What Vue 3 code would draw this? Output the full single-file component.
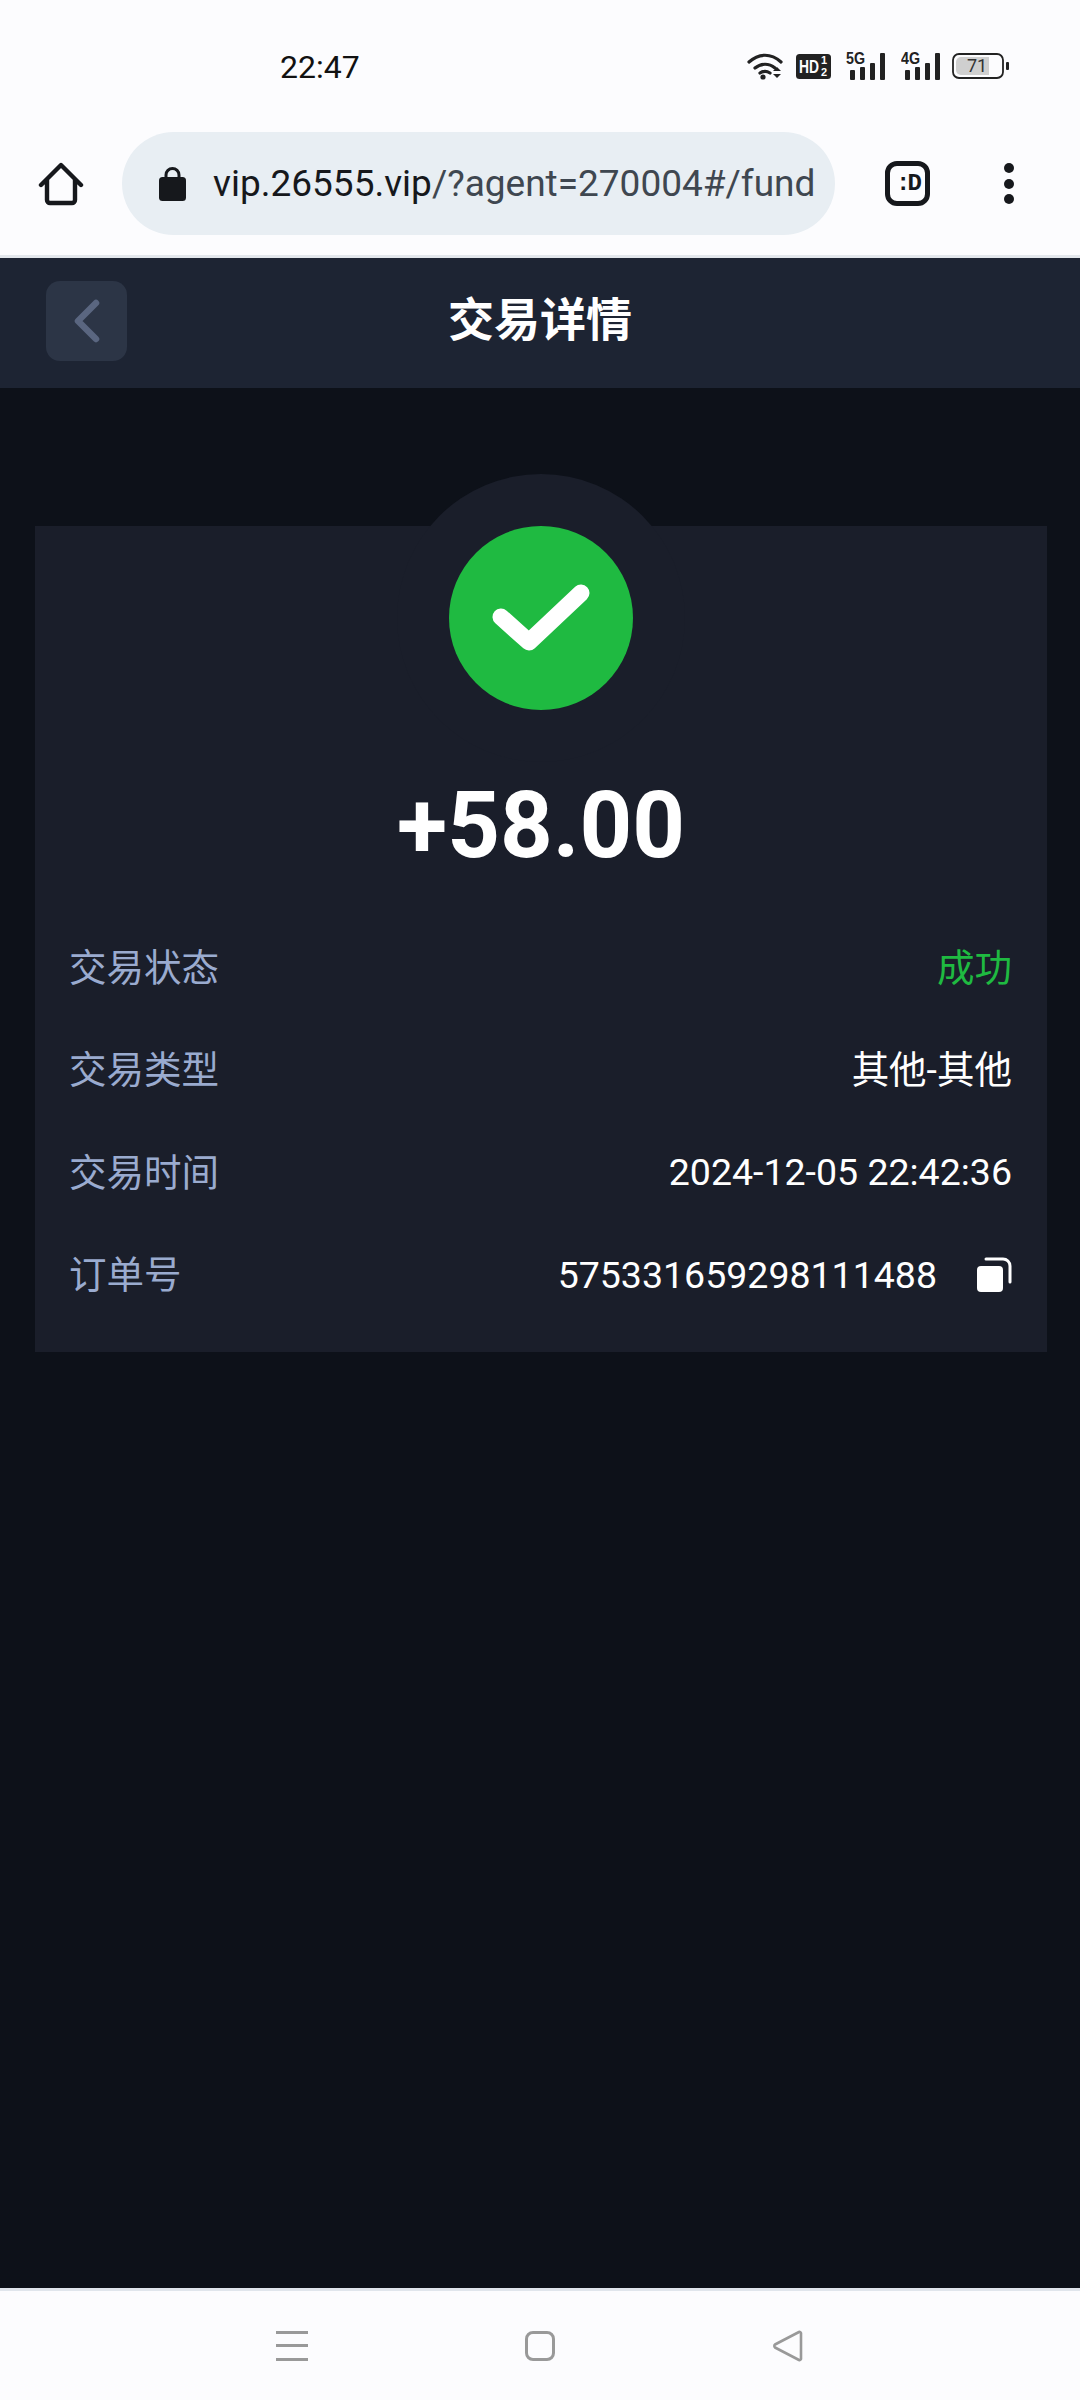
<template>
  <div class="screen">
    <div class="status-bar">
      <span class="clock">22:47</span>
      <div class="status-icons">
        <svg class="ic-wifi" width="38" height="28" viewBox="0 0 38 28">
          <path d="M2 10C12 1 24 1 34 10M8 16c6-5 14-5 20 0M13 21c3-2 7-2 10 0" fill="none" stroke="#222" stroke-width="3.2" stroke-linecap="round" />
          <circle cx="16" cy="25" r="2.6" fill="#222" />
          <path d="M26 19l4-4 4 4zM26 22h8l-4 4z" fill="#222" />
        </svg>
        <svg class="ic-hd" width="35" height="25" viewBox="0 0 35 25">
          <rect width="35" height="25" rx="3.5" fill="#222" />
          <text x="3" y="19" class="hd-text" textLength="20" lengthAdjust="spacingAndGlyphs">HD</text>
          <text x="25" y="10" class="hd-sub">1</text>
          <text x="25" y="22" class="hd-sub">2</text>
        </svg>
        <svg v-for="net in networks" :key="net" class="ic-signal" width="40" height="34" viewBox="0 -6 40 34">
          <text x="0" y="12" class="net-text" textLength="19" lengthAdjust="spacingAndGlyphs">{{ net }}</text>
          <rect x="4" y="18" width="5" height="10" rx="1" fill="#222" />
          <rect x="14" y="15" width="5" height="13" rx="1" fill="#222" />
          <rect x="24" y="11" width="5" height="17" rx="1" fill="#222" />
          <rect x="34" y="1" width="5" height="27" rx="1" fill="#222" />
        </svg>
        <svg class="ic-battery" width="57" height="26" viewBox="0 0 57 26">
          <rect x="1" y="1" width="50" height="24" rx="6" fill="none" stroke="#222" stroke-width="1.8" />
          <path d="M9 4h28v18H9a5 5 0 0 1-5-5V9a5 5 0 0 1 5-5z" fill="#cfcfcf" />
          <text x="25" y="19" text-anchor="middle" class="battery-text">71</text>
          <rect x="54" y="9" width="3" height="8" rx="1" fill="#222" />
        </svg>
      </div>
    </div>

    <div class="toolbar">
      <svg class="home" width="46" height="46" viewBox="0 0 46 46">
        <path d="M3 24L23 4l20 20M9 19v20a3 3 0 0 0 3 3h22a3 3 0 0 0 3-3V19" fill="none" stroke="#16181c" stroke-width="4.4" stroke-linecap="round" stroke-linejoin="round" />
      </svg>
      <div class="url-bar">
        <svg class="lock" width="27" height="35" viewBox="0 0 27 35">
          <path d="M7 13V9a6.500 6.500 0 0 1 13 0v4" fill="none" stroke="#16181c" stroke-width="3" />
          <rect y="11" width="27" height="24" rx="3.500" fill="#16181c" />
        </svg>
        <span class="url"><b>vip.26555.vip</b>/?agent=270004#/fund</span>
      </div>
      <div class="tab-btn">:D</div>
      <div class="menu-dots"><i></i><i></i><i></i></div>
    </div>

    <div class="page">
      <header class="topbar">
        <div class="back">
          <svg width="26" height="44" viewBox="0 0 26 44">
            <path d="M22 4L4 22l18 18" fill="none" stroke="#5a6680" stroke-width="6.500" stroke-linecap="round" stroke-linejoin="round" />
          </svg>
        </div>
        <h1 class="title">交易详情</h1>
      </header>

      <section class="card">
        <div class="bump"></div>
        <div class="badge">
          <svg class="check" width="98" height="69" viewBox="0 0 98 69">
            <path d="M9 33l28 25L89 9" fill="none" stroke="#fff" stroke-width="17" stroke-linecap="round" stroke-linejoin="round" />
          </svg>
        </div>
        <div class="amount">+58.00</div>
        <div v-for="row in rows" :key="row.label" class="row">
          <span class="label">{{ row.label }}</span>
          <span class="value" :class="{ ok: row.ok, cjk: row.cjk }">
            {{ row.value }}
            <svg v-if="row.copy" class="copy" width="35" height="35" viewBox="0 0 35 35">
              <rect x="0" y="9" width="26" height="26" rx="4" fill="#fff" />
              <path d="M9 2h17a7 7 0 0 1 7 7v16" fill="none" stroke="#fff" stroke-width="3" stroke-linecap="round" />
            </svg>
          </span>
        </div>
      </section>
    </div>

    <nav class="nav-bar">
      <div class="nav-menu"><i></i><i></i><i></i></div>
      <div class="nav-home"></div>
      <svg width="32" height="32" viewBox="0 0 32 32">
        <path d="M29 3v26a1.500 1.500 0 0 1-2 1L3 17.500a2 2 0 0 1 0-3L27 2a1.500 1.500 0 0 1 2 1z" fill="none" stroke="#999" stroke-width="2.600" stroke-linejoin="round" />
      </svg>
    </nav>
  </div>
</template>

<script setup>
const networks = ['5G', '4G']

const rows = [
  { label: '交易状态', value: '成功', ok: true, cjk: true },
  { label: '交易类型', value: '其他-其他', cjk: true },
  { label: '交易时间', value: '2024-12-05 22:42:36' },
  { label: '订单号', value: '575331659298111488', copy: true }
]
</script>

<style>
html,
body {
  margin: 0;
  background: #fcfcfe;
}
</style>

<style scoped>
.screen {
  width: 1080px;
  height: 2400px;
  display: flex;
  flex-direction: column;
  font-family: Roboto, "Noto Sans CJK SC", sans-serif;
  background: #fcfcfe;
}

.status-bar {
  height: 132px;
  flex: none;
  box-sizing: border-box;
  padding: 52px 71px 0 280px;
  display: flex;
  justify-content: space-between;
  align-items: flex-start;
}

.clock {
  font-size: 32px;
  line-height: 30px;
  color: #111;
}

.status-icons {
  display: flex;
  align-items: center;
  gap: 11px;
}

.status-icons svg {
  display: block;
}

.ic-signal {
  margin: -6px 0 0 4px;
}

.hd-text,
.hd-sub,
.net-text {
  font-family: "Liberation Sans", sans-serif;
  font-weight: 700;
  fill: #fff;
}

.hd-text {
  font-size: 18px;
}

.hd-sub {
  font-size: 11px;
}

.net-text {
  font-size: 16px;
  fill: #222;
}

.battery-text {
  font-size: 18px;
  fill: #333;
}

.toolbar {
  height: 126px;
  flex: none;
  box-sizing: border-box;
  padding: 0 0 20px 38px;
  display: flex;
  align-items: center;
  border-bottom: 3px solid #e3e7ec;
}

.home {
  flex: none;
}

.url-bar {
  width: 713px;
  height: 103px;
  margin-left: 38px;
  box-sizing: border-box;
  padding: 0 20px 0 37px;
  border-radius: 52px;
  background: #e8eef3;
  display: flex;
  align-items: center;
  gap: 27px;
  overflow: hidden;
  flex: none;
}

.lock {
  flex: none;
}

.url {
  font-size: 37px;
  color: #3f4750;
  white-space: nowrap;
}

.url b {
  font-weight: 400;
  color: #16181c;
}

.tab-btn {
  width: 45px;
  height: 45px;
  margin-left: 50px;
  flex: none;
  box-sizing: border-box;
  border: 5px solid #16181c;
  border-radius: 12px;
  font-family: "Liberation Mono", monospace;
  font-size: 24px;
  font-weight: 700;
  color: #16181c;
  display: flex;
  align-items: center;
  justify-content: center;
  letter-spacing: -3px;
}

.menu-dots {
  margin-left: 74px;
  display: flex;
  flex-direction: column;
  gap: 5.5px;
}

.menu-dots i {
  display: block;
  width: 10px;
  height: 10px;
  border-radius: 50%;
  background: #16181c;
}

.page {
  flex: 1;
  background: #0d1119;
}

.topbar {
  height: 130px;
  box-sizing: border-box;
  padding-bottom: 14px;
  position: relative;
  background: #1d2433;
  display: flex;
  align-items: center;
  justify-content: center;
}

.back {
  position: absolute;
  left: 46px;
  top: 23px;
  width: 81px;
  height: 80px;
  border-radius: 14px;
  background: #2c3546;
  display: flex;
  align-items: center;
  justify-content: center;
}

.title {
  margin: 0;
  font-size: 46px;
  font-weight: 700;
  color: #fff;
}

.card {
  position: relative;
  margin: 138px 33px 0 35px;
  padding-bottom: 26px;
  background: #1a1e2a;
  display: flex;
  flex-direction: column;
  align-items: center;
}

.bump {
  position: absolute;
  left: 362px;
  top: -52px;
  width: 288px;
  height: 288px;
  border-radius: 50%;
  background: #1a1e2a;
}

.badge {
  position: relative;
  width: 184px;
  height: 184px;
  border-radius: 50%;
  background: #1fba41;
  display: flex;
  align-items: center;
  justify-content: center;
}

.amount {
  position: relative;
  margin: 63px 0 37px;
  font-size: 92px;
  line-height: 106px;
  font-weight: 700;
  color: #fff;
}

.row {
  position: relative;
  width: 100%;
  height: 102.5px;
  box-sizing: border-box;
  padding: 0 35px 0 34px;
  display: flex;
  align-items: center;
  justify-content: space-between;
  font-size: 37.5px;
}

.label {
  padding-bottom: 6px;
  color: #9aabcf;
}

.value {
  color: #fff;
  display: flex;
  align-items: center;
}

.value.cjk {
  padding-bottom: 6px;
}

.value.ok {
  color: #1fba41;
}

.copy {
  margin-left: 40px;
}

.nav-bar {
  height: 112px;
  flex: none;
  border-top: 3px solid #e0e5ec;
  display: flex;
  align-items: center;
  justify-content: center;
  gap: 217px;
  box-sizing: border-box;
  background: #fcfcfe;
}

.nav-menu {
  width: 32px;
  display: flex;
  flex-direction: column;
  gap: 10.5px;
}

.nav-menu i {
  display: block;
  height: 3px;
  background: #999;
}

.nav-home {
  width: 30px;
  height: 30px;
  box-sizing: border-box;
  border: 3px solid #999;
  border-radius: 8px;
}
</style>
